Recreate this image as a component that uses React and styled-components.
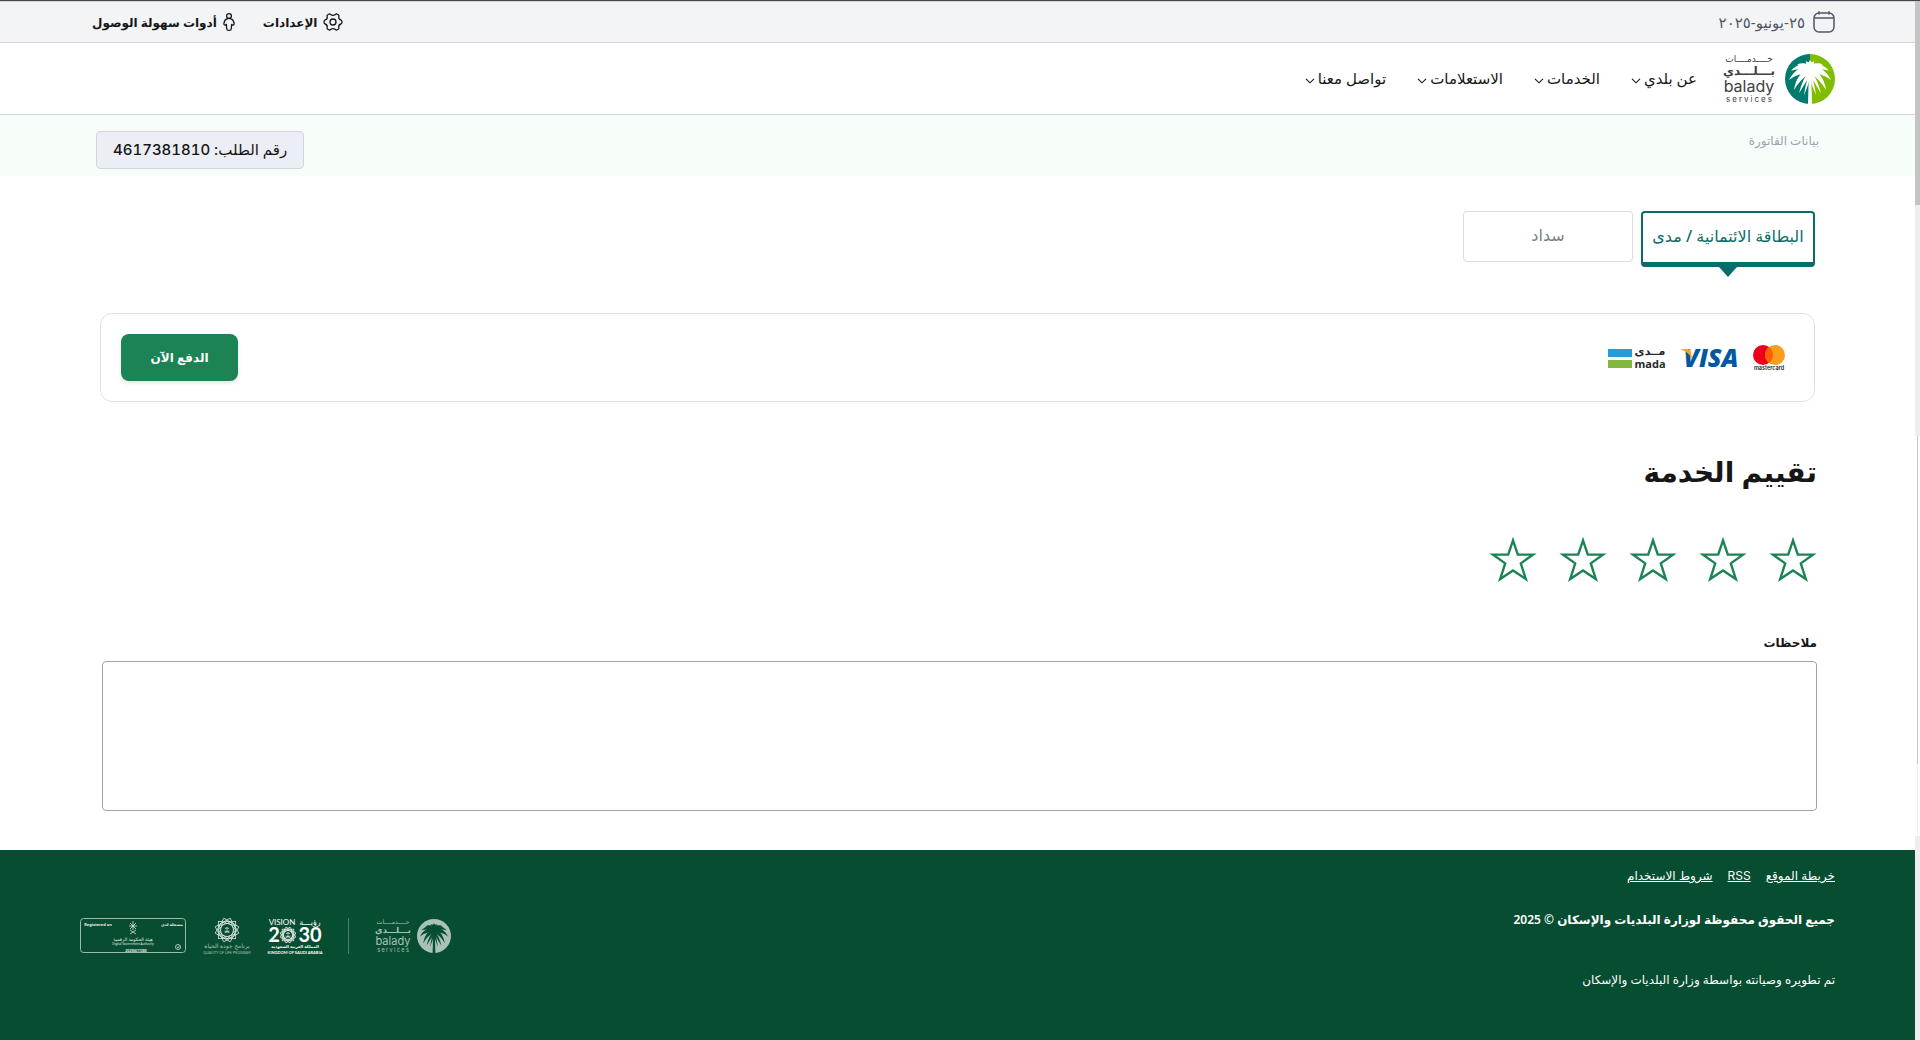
import React, { useState } from "react";
import styled, { createGlobalStyle } from "styled-components";

const GlobalStyle = createGlobalStyle`
  * {
    box-sizing: border-box;
  }
  body {
    margin: 0;
    background: #ffffff;
    color: #161616;
    font-family: "Noto Sans", "DejaVu Sans", sans-serif;
    font-size: 14px;
  }
  button, textarea {
    font-family: inherit;
  }
  svg {
    overflow: visible;
  }
`;

const navItems = ["عن بلدي", "الخدمات", "الاستعلامات", "تواصل معنا"];
const footerLinks = ["خريطة الموقع", "RSS", "شروط الاستخدام"];

/* half of the fronds, the other half is mirrored */
const fronds = [
  "M75 18 L71 25 L62 22 L64 29 Q48 25 36 32 Q56 34 75 46 Z",
  "M75 32 Q44 22 18 50 Q46 42 75 54 Z",
  "M74 36 Q32 38 12 78 Q40 56 75 58 Z",
  "M74 42 Q34 58 27 108 Q48 72 75 60 Z",
  "M75 48 Q52 74 42 118 Q60 88 76 64 Z",
  "M76 50 Q62 84 57 124 Q70 94 77 66 Z",
];

const Palm = ({ size, left, right, leaf }) => (
  <svg width={size} height={size} viewBox="0 0 150 150" aria-hidden="true">
    <path d="M75 0 A75 75 0 0 0 75 150 Z" fill={left} />
    <path d="M75 0 A75 75 0 0 1 75 150 Z" fill={right} />
    <g fill={leaf}>
      <path d="M72 40 H78 L81 150 H69 Z" />
      {fronds.map((d) => (
        <path key={d} d={d} />
      ))}
      <g transform="translate(150 0) scale(-1 1)">
        {fronds.map((d) => (
          <path key={d} d={d} />
        ))}
      </g>
    </g>
  </svg>
);

const BaladyText = ({ width, height, color }) => (
  <svg width={width} height={height} viewBox="0 0 52 48" fill={color} textAnchor="middle" role="img" aria-label="balady services">
    <text x="26" y="7" fontSize="9">خــــدمــــات</text>
    <text x="26" y="20" fontSize="12" fontWeight="600">بـــلـــدي</text>
    <text x="26" y="37" fontSize="16" fontFamily="Inter">balady</text>
    <text x="27" y="47" fontSize="8" fontFamily="Inter" letterSpacing="2">services</text>
  </svg>
);

const Chevron = () => (
  <svg width="10" height="6" viewBox="0 0 10 6" fill="none" stroke="#161616" strokeWidth="1.1">
    <path d="M1 0.8 L5 4.8 L9 0.8" />
  </svg>
);

const CalendarIcon = () => (
  <svg width="22" height="22" viewBox="0 0 22 22" fill="none" stroke="#4d5761" strokeWidth="1.5" strokeLinecap="round">
    <rect x="1" y="2" width="20" height="19" rx="5" />
    <path d="M1.5 7 H20.5 M6 0.8 V3 M16 0.8 V3" />
  </svg>
);

const GearIcon = () => (
  <svg width="20" height="18" viewBox="0 0 20 18" fill="none" stroke="#161616" strokeWidth="1.3" strokeLinejoin="round">
    <path d="M6.2 1 Q7 .8 7.6 1.5 Q10 3.2 12.4 1.5 Q13 .8 13.8 1 L15.6 2 Q16.2 2.6 15.8 3.6 Q15.4 6.4 18 7 Q19 7.4 19 9 Q19 10.6 18 11 Q15.4 11.6 15.8 14.4 Q16.2 15.4 15.6 16 L13.8 17 Q13 17.2 12.4 16.5 Q10 14.8 7.6 16.5 Q7 17.2 6.2 17 L4.4 16 Q3.8 15.4 4.2 14.4 Q4.6 11.6 2 11 Q1 10.6 1 9 Q1 7.4 2 7 Q4.6 6.4 4.2 3.6 Q3.8 2.6 4.4 2 Z" />
    <circle cx="10" cy="9" r="3" />
  </svg>
);

const PersonIcon = () => (
  <svg width="12" height="18" viewBox="0 0 12 18" fill="none" stroke="#161616" strokeWidth="1.3" strokeLinejoin="round">
    <circle cx="6" cy="3" r="2.4" />
    <path d="M4 5.8 Q1.6 6.4 1 10 Q.6 12 2 12.2 Q3 12.2 3.4 11.4 Q3.4 15 4.2 17 Q6 17.8 7.8 17 Q8.6 15 8.6 11.4 Q9 12.2 10 12.2 Q11.4 12 11 10 Q10.4 6.4 8 5.8 Q6 5 4 5.8 Z" />
  </svg>
);

const Mastercard = () => (
  <svg width="34" height="26" viewBox="0 0 34 26" role="img" aria-label="mastercard">
    <circle cx="11" cy="10" r="10" fill="#eb001b" />
    <circle cx="23" cy="10" r="10" fill="#f79e1b" />
    <path d="M17 2 A10 10 0 0 1 17 18 A10 10 0 0 1 17 2" fill="#ff5f00" />
    <text x="17" y="25" fontSize="5.5" fontFamily="Inter" fontWeight="600" fill="#231f20" textAnchor="middle">mastercard</text>
  </svg>
);

const Visa = () => (
  <svg width="58" height="22" viewBox="0 0 58 22" role="img" aria-label="VISA">
    <text x="31" y="20" fontSize="25" fontFamily="Open Sans" fontWeight="800" fontStyle="italic" fill="#0058a0" textAnchor="middle">VISA</text>
    <path d="M1 2 H8 Q10 2 10.6 4.4 L12.6 13 Q9 5 1 2.6 Z" fill="#faa61a" />
  </svg>
);

const Mada = () => (
  <svg width="58" height="22" viewBox="0 0 58 22" role="img" aria-label="mada">
    <rect x="0" y="2" width="24" height="8" fill="#259bd7" />
    <rect x="0" y="13" width="24" height="8" fill="#84b740" />
    <g fill="#27292d" textAnchor="middle" fontWeight="700">
      <text x="42" y="8" fontSize="11">مــدى</text>
      <text x="42" y="21" fontSize="11" fontFamily="Open Sans">mada</text>
    </g>
  </svg>
);

const Star = () => (
  <svg width="48" height="46" viewBox="0 0 48 46" fill="none" stroke="#1b8354" strokeWidth="2.4">
    <path d="M24 4.4 L28.8 18.6 H44 L31.8 27.4 L36.8 43 L24 34.4 L11.2 43 L16.2 27.4 L4 18.6 H19.2 Z" />
  </svg>
);

const petals = [0, 30, 60];

const Ornament = ({ x, y, r }) => (
  <g transform={`translate(${x} ${y})`} fill="none" stroke="#d5e2dc" strokeWidth="0.8">
    {petals.map((a) => (
      <rect key={a} x={-r * 0.72} y={-r * 0.72} width={r * 1.44} height={r * 1.44} transform={`rotate(${a})`} />
    ))}
    {petals.map((a) => (
      <rect key={a} x={-r * 0.52} y={-r * 0.52} width={r * 1.04} height={r * 1.04} transform={`rotate(${a + 15})`} />
    ))}
    <circle r={r * 0.46} fill="#074d31" stroke="none" />
    <path d="M0 -2.4 V2 M-2 -1.4 L0 -2.4 L2 -1.4 M-2.4 2.6 L2.4 1 M-2.4 1 L2.4 2.6" />
  </g>
);

const VisionLogo = () => (
  <svg width="54" height="36" viewBox="0 0 54 36" fill="#ffffff" role="img" aria-label="Vision 2030">
    <g textAnchor="middle">
      <text x="14" y="7" fontSize="8" fontFamily="Lato">VISION</text>
      <text x="42" y="7" fontSize="8">رؤيـــة</text>
      <text x="6" y="24" fontSize="20" fontFamily="Lato" fontWeight="700">2</text>
      <text x="42" y="24" fontSize="20" fontFamily="Lato" fontWeight="700">30</text>
      <text x="27" y="30.4" fontSize="4" fontWeight="600">المملكة العربية السعودية</text>
      <text x="27" y="35.6" fontSize="4" fontFamily="Lato" fontWeight="700">KINGDOM OF SAUDI ARABIA</text>
    </g>
    <Ornament x="20" y="17" r="8" />
  </svg>
);

const QualityLogo = () => (
  <svg width="46" height="36" viewBox="0 0 46 36" fill="#a9c2b7" role="img" aria-label="Quality of Life Program">
    <Ornament x="23" y="12" r="12" />
    <text x="23" y="30" fontSize="6" textAnchor="middle">برنامج جودة الحياة</text>
    <text x="23" y="35.6" fontSize="3.6" fontFamily="Lato" textAnchor="middle">QUALITY OF LIFE PROGRAM</text>
  </svg>
);

const AuthorityLogo = () => (
  <svg width="106" height="36" viewBox="0 0 106 36" fill="#e6efea" role="img" aria-label="Digital Government Authority">
    <rect x="0.5" y="0.5" width="105" height="34" rx="3" fill="none" stroke="#9dbbad" />
    <g textAnchor="middle">
      <text x="18" y="8" fontSize="4" fontWeight="700">Registered on</text>
      <text x="92" y="8" fontSize="4" fontWeight="700">مسجلة لدى</text>
      <text x="53" y="22.6" fontSize="4.6">هيئة الحكومة الرقمية</text>
      <text x="53" y="27.4" fontSize="3">Digital Government Authority</text>
      <text x="56" y="33.6" fontSize="3.4" fontWeight="700">20250617280</text>
    </g>
    <g fill="none" stroke="#d5e2dc" strokeWidth="0.8">
      <path d="M53 3 V12 M50 5 L56 11 M56 5 L50 11 M49 8 H57 M50 16 L56 12 M56 16 L50 12" />
      <circle cx="98" cy="29" r="2.5" />
      <path d="M97 29 L98 30 L99.4 28" />
    </g>
  </svg>
);

const App = () => {
  const [rating, setRating] = useState(0);

  return (
    <>
      <GlobalStyle />
      <Shell>
        <Page dir="rtl">
          <TopBar>
            <DateLabel>
              <CalendarIcon />
              ٢٥-يونيو-٢٠٢٥
            </DateLabel>
            <Tools>
              <ToolButton>
                <GearIcon />
                الإعدادات
              </ToolButton>
              <ToolButton>
                <PersonIcon />
                أدوات سهولة الوصول
              </ToolButton>
            </Tools>
          </TopBar>

          <Header>
            <Brand href="#">
              <Palm size={50} left="#007a6e" right="#80bc00" leaf="#ffffff" />
              <BaladyText width={52} height={48} color="#414042" />
            </Brand>
            <Nav>
              {navItems.map((item) => (
                <NavButton key={item}>
                  {item}
                  <Chevron />
                </NavButton>
              ))}
            </Nav>
          </Header>

          <SubHeader>
            <Crumb>بيانات الفاتورة</Crumb>
            <RequestTag>
              رقم الطلب: <RequestNumber>4617381810</RequestNumber>
            </RequestTag>
          </SubHeader>

          <Payment>
            <Tabs role="tablist">
              <Tab role="tab" aria-selected="true" $active>
                البطاقة الائتمانية / مدى
              </Tab>
              <Tab role="tab" aria-selected="false">سداد</Tab>
            </Tabs>
            <Card>
              <Methods>
                <Mastercard />
                <Visa />
                <Mada />
              </Methods>
              <PayButton>الدفع الآن</PayButton>
            </Card>
          </Payment>

          <Feedback>
            <Title>تقييم الخدمة</Title>
            <Stars>
              {[1, 2, 3, 4, 5].map((n) => (
                <StarButton key={n} aria-label={`${n}`} $on={n <= rating} onClick={() => setRating(n)}>
                  <Star />
                </StarButton>
              ))}
            </Stars>
            <NotesLabel htmlFor="notes">ملاحظات</NotesLabel>
            <Notes id="notes" />
          </Feedback>

          <Footer>
            <FooterText>
              <FooterLinks>
                {footerLinks.map((link) => (
                  <a key={link} href="#">{link}</a>
                ))}
              </FooterLinks>
              <Copyright>جميع الحقوق محفوظة لوزارة البلديات والإسكان © 2025</Copyright>
              <Developed>تم تطويره وصيانته بواسطة وزارة البلديات والإسكان</Developed>
            </FooterText>
            <Logos>
              <FooterBrand>
                <Palm size={34} left="#a9c2b7" right="#a9c2b7" leaf="#074d31" />
                <BaladyText width={36} height={34} color="#a9c2b7" />
              </FooterBrand>
              <VisionLogo />
              <QualityLogo />
              <AuthorityLogo />
            </Logos>
          </Footer>
        </Page>
        <Rail>
          <RailThumb />
          <RailTrack />
          <InnerRail />
          <RailEnd />
        </Rail>
      </Shell>
    </>
  );
};

const Shell = styled.div`
  display: grid;
  grid-template-columns: minmax(0, 1fr) 5px;
  min-height: 100vh;
  border-top: 1px solid #45464b;
`;

const Page = styled.div`
  display: flex;
  flex-direction: column;
`;

const TopBar = styled.div`
  display: flex;
  justify-content: space-between;
  align-items: center;
  height: 42px;
  padding: 0 80px;
  background: #f3f4f6;
  border-top: 1px solid #d2d6db;
  border-bottom: 1px solid #d2d6db;
`;

const DateLabel = styled.div`
  display: flex;
  align-items: center;
  gap: 8px;
  color: #4d5761;
  font-size: 15px;
`;

const Tools = styled.div`
  display: flex;
  gap: 28px;
  padding-left: 12px;
`;

const ToolButton = styled.button`
  display: flex;
  align-items: center;
  gap: 6px;
  padding: 0;
  border: 0;
  background: none;
  color: #161616;
  font-size: 12px;
  font-weight: 600;
`;

const Header = styled.header`
  display: flex;
  align-items: center;
  gap: 26px;
  height: 72px;
  padding: 0 80px;
  border-bottom: 1px solid #d2d6db;
`;

const Brand = styled.a`
  display: flex;
  align-items: center;
  gap: 10px;
`;

const Nav = styled.nav`
  display: flex;
  gap: 31px;
`;

const NavButton = styled.button`
  display: flex;
  align-items: center;
  gap: 3px;
  padding: 0 0 2px;
  border: 0;
  background: none;
  color: #161616;
  font-size: 15px;

  svg {
    margin-top: 6px;
  }
`;

const SubHeader = styled.div`
  display: flex;
  justify-content: space-between;
  align-items: flex-start;
  height: 61px;
  padding: 16px 96px 0;
  background: #f7fdf9;
`;

const Crumb = styled.span`
  color: #9da4ae;
  font-size: 12px;
  line-height: 20px;
`;

const RequestTag = styled.div`
  height: 38px;
  padding: 0 16px;
  border: 1px solid #d2d6db;
  border-radius: 4px;
  background: #ebeef4;
  font-size: 15px;
  font-weight: 500;
  line-height: 34px;
`;

const RequestNumber = styled.span`
  font-family: Inter, sans-serif;
  font-variant-numeric: tabular-nums;
`;

const Payment = styled.section`
  padding: 35px 100px 0;
`;

const Tabs = styled.div`
  display: flex;
  align-items: flex-start;
  gap: 8px;
  height: 56px;
`;

const Tab = styled.button`
  position: relative;
  width: ${(p) => (p.$active ? "174px" : "170px")};
  height: ${(p) => (p.$active ? "56px" : "51px")};
  padding: 0 0 4px;
  border: ${(p) => (p.$active ? "2px solid #086e6b" : "1px solid #d9dbdf")};
  border-bottom-width: ${(p) => (p.$active ? "5px" : "1px")};
  border-radius: 4px;
  background: #ffffff;
  color: ${(p) => (p.$active ? "#086e6b" : "#808080")};
  font-size: 16px;
  font-weight: 500;
  white-space: nowrap;

  &::after {
    content: "";
    display: ${(p) => (p.$active ? "block" : "none")};
    position: absolute;
    top: 100%;
    left: 50%;
    margin: 5px 0 0 -9px;
    border: 9px solid transparent;
    border-top: 10px solid #086e6b;
    border-bottom: 0;
  }
`;

const Card = styled.div`
  display: flex;
  justify-content: space-between;
  align-items: center;
  height: 89px;
  margin-top: 46px;
  padding: 0 28px 0 20px;
  border: 1px solid #dfe1e7;
  border-radius: 12px;
`;

const Methods = styled.div`
  display: flex;
  align-items: center;
  gap: 14px;
`;

const PayButton = styled.button`
  width: 117px;
  height: 47px;
  border: 0;
  border-radius: 8px;
  background: #1b8354;
  box-shadow: 0 2px 4px rgba(16, 24, 40, 0.12);
  color: #ffffff;
  font-size: 12px;
  font-weight: 600;
`;

const Feedback = styled.section`
  display: flex;
  flex-direction: column;
  padding: 46px 98px 39px 102px;
`;

const Title = styled.h1`
  margin: 0;
  font-size: 28px;
  font-weight: 600;
  line-height: 46px;
`;

const Stars = styled.div`
  display: flex;
  gap: 22px;
  margin-top: 42px;
`;

const StarButton = styled.button`
  display: flex;
  padding: 0;
  border: 0;
  background: none;

  path {
    fill: ${(p) => (p.$on ? "#1b8354" : "none")};
  }
`;

const NotesLabel = styled.label`
  margin-top: 51px;
  font-size: 12px;
  font-weight: 600;
  line-height: 20px;
`;

const Notes = styled.textarea`
  height: 150px;
  margin-top: 8px;
  border: 1px solid #9da4ae;
  border-radius: 4px;
  resize: none;
`;

const Footer = styled.footer`
  display: flex;
  flex: 1;
  justify-content: space-between;
  align-items: flex-start;
  padding: 14px 80px 32px;
  background: #074d31;
  color: #ffffff;
`;

const FooterText = styled.div`
  font-size: 12px;
  line-height: 24px;
`;

const FooterLinks = styled.div`
  display: flex;
  gap: 15px;
  font-family: Inter, "Noto Sans", "DejaVu Sans", sans-serif;

  a {
    color: #ffffff;
  }
`;

const Copyright = styled.p`
  margin: 20px 0 0;
  font-weight: 600;
`;

const Developed = styled.p`
  margin: 36px 0 0;
`;

const Logos = styled.div`
  display: flex;
  align-items: center;
  gap: 18px;
  padding-top: 54px;
`;

const FooterBrand = styled.div`
  display: flex;
  align-items: center;
  gap: 6px;
  height: 36px;
  margin-left: 8px;
  padding-left: 26px;
  border-left: 1px solid #4f8069;
`;

const Rail = styled.div`
  display: flex;
  flex-direction: column;
`;

const RailThumb = styled.div`
  flex: 204;
  background: #c4c4c4;
`;

const RailTrack = styled.div`
  flex: 231;
  background: #eeeeee;
`;

const InnerRail = styled.div`
  flex: 400;
  margin: 0 2px;
  background: linear-gradient(#c4c4c4 82%, #eeeeee 82%);
`;

const RailEnd = styled.div`
  flex: 204;
  background: #eeeeee;
`;

export default App;
